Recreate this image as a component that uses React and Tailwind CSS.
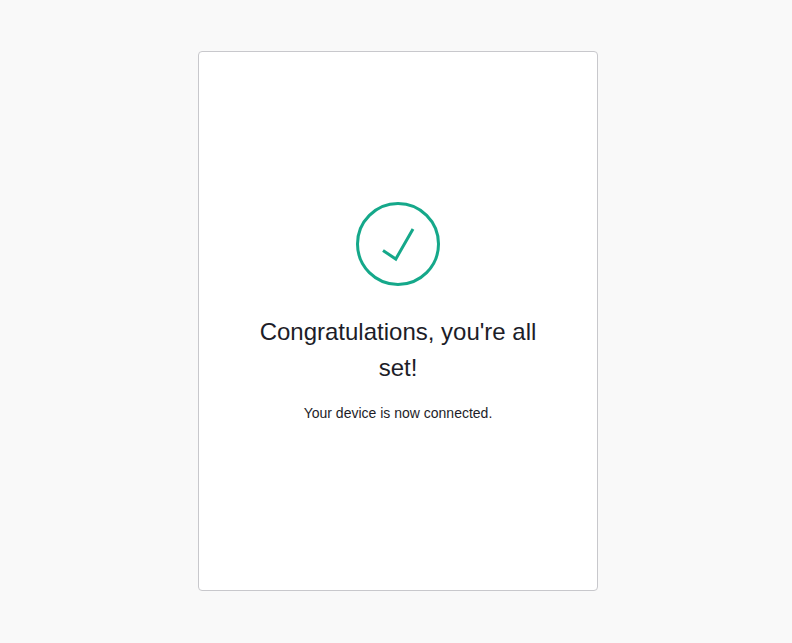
export default function App() {
  return (
    <main className="flex h-screen w-full items-center justify-center bg-[#f9f9f9] pl-1 pb-px font-['Liberation_Sans',Arial,sans-serif] text-[#1d1d28]">
      <section className="flex h-[540px] w-[400px] flex-col items-center rounded border border-[#c8c8cc] bg-white px-10 pt-[150px] text-center">
        <svg className="size-[84px] shrink-0" viewBox="0 0 84 84" fill="none" stroke="#15a88a" strokeWidth="3">
          <circle cx="42" cy="42" r="40.5" />
          <path d="M27 48.5L39.8 57L57 27" />
        </svg>
        <h1 className="mt-7 text-2xl leading-9">Congratulations, you're all set!</h1>
        <p className="mt-[17px] text-sm leading-[21px]">Your device is now connected.</p>
      </section>
    </main>
  );
}
